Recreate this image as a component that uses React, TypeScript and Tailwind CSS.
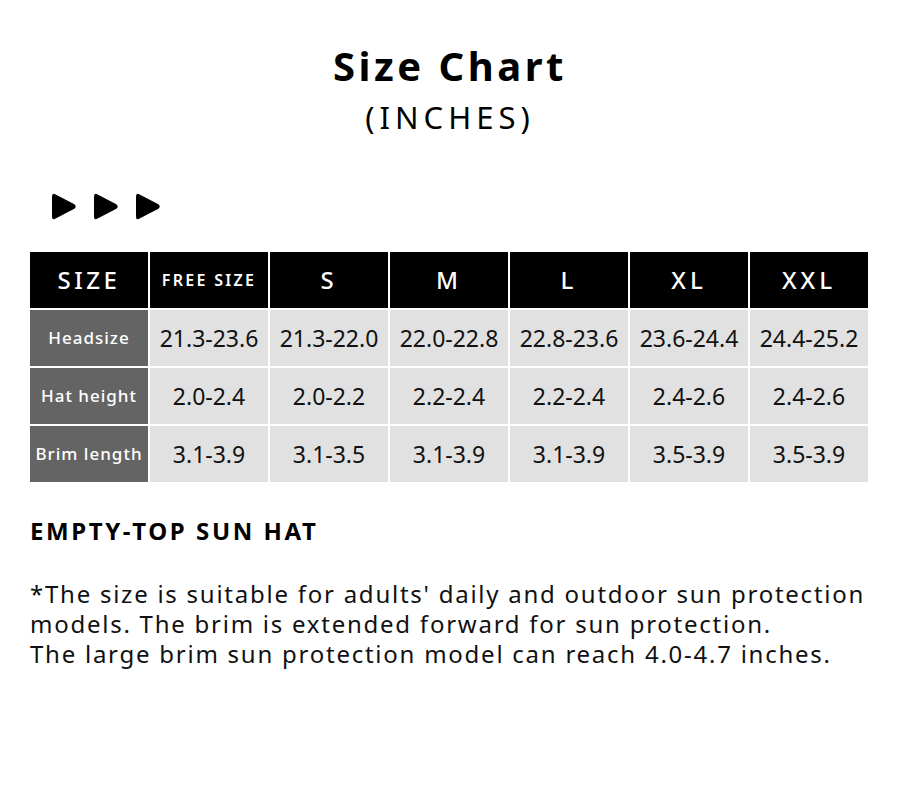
const sizes = ["FREE SIZE", "S", "M", "L", "XL", "XXL"];

const rows = [
  { label: "Headsize", values: ["21.3-23.6", "21.3-22.0", "22.0-22.8", "22.8-23.6", "23.6-24.4", "24.4-25.2"] },
  { label: "Hat height", values: ["2.0-2.4", "2.0-2.2", "2.2-2.4", "2.2-2.4", "2.4-2.6", "2.4-2.6"] },
  { label: "Brim length", values: ["3.1-3.9", "3.1-3.5", "3.1-3.9", "3.1-3.9", "3.5-3.9", "3.5-3.9"] },
];

function Arrow() {
  return (
    <svg width="26" height="29" viewBox="0 0 26 29">
      <path
        d="M1 4.5 Q1 0.5 4.6 2.4 L23.4 12.2 Q26 14.5 23.4 16.8 L4.6 26.6 Q1 28.5 1 24.5 Z"
        fill="#000"
      />
    </svg>
  );
}

export default function App() {
  return (
    <main
      className="w-[900px] h-[800px] bg-white text-black"
      style={{ fontFamily: '"Noto Sans", "Open Sans", sans-serif' }}
    >
      {/* Title */}
      <div className="flex flex-col items-center pt-[40px]">
        <h1 className="text-[40px] leading-[52px] font-bold tracking-[3.5px]">Size Chart</h1>
        <p className="text-[31px] leading-[40px] tracking-[5px] mt-[5px]">(INCHES)</p>
      </div>

      {/* Arrows */}
      <div className="flex gap-[16px] pl-[51px] mt-[55px]">
        <Arrow />
        <Arrow />
        <Arrow />
      </div>

      {/* Table */}
      <div className="ml-[30px] w-[838px] mt-[31px] grid grid-cols-7 gap-[2px]">
        <div className="h-[56px] bg-black text-white flex items-center justify-center text-[24px] font-medium tracking-[3.5px]">
          SIZE
        </div>
        {sizes.map((s) => (
          <div
            key={s}
            className={
              s === "FREE SIZE"
                ? "h-[56px] bg-black text-white flex items-center justify-center text-[16px] font-semibold tracking-[2.3px]"
                : "h-[56px] bg-black text-white flex items-center justify-center text-[24px] font-medium tracking-[4px]"
            }
          >
            {s}
          </div>
        ))}
        {rows.map((r) => (
          <>
            <div
              key={r.label}
              className="h-[56px] bg-[#646464] text-white flex items-center justify-center text-[17px] font-medium tracking-[1px]"
            >
              {r.label}
            </div>
            {r.values.map((v, i) => (
              <div
                key={r.label + i}
                className="h-[56px] bg-[#e1e1e1] text-[#111] flex items-center justify-center text-[23px] tracking-[0px]"
              >
                {v}
              </div>
            ))}
          </>
        ))}
      </div>

      {/* Description */}
      <div className="px-[30px] mt-[34px]">
        <h2 className="text-[24px] leading-[30px] font-bold tracking-[2.6px]">EMPTY-TOP SUN HAT</h2>
        <p className="mt-[33px] text-[24px] leading-[30px] tracking-[1.75px] text-[#111] whitespace-nowrap">
          *The size is suitable for adults' daily and outdoor sun protection
          <br />
          models. The brim is extended forward for sun protection.
          <br />
          The large brim sun protection model can reach 4.0-4.7 inches.
        </p>
      </div>
    </main>
  );
}
